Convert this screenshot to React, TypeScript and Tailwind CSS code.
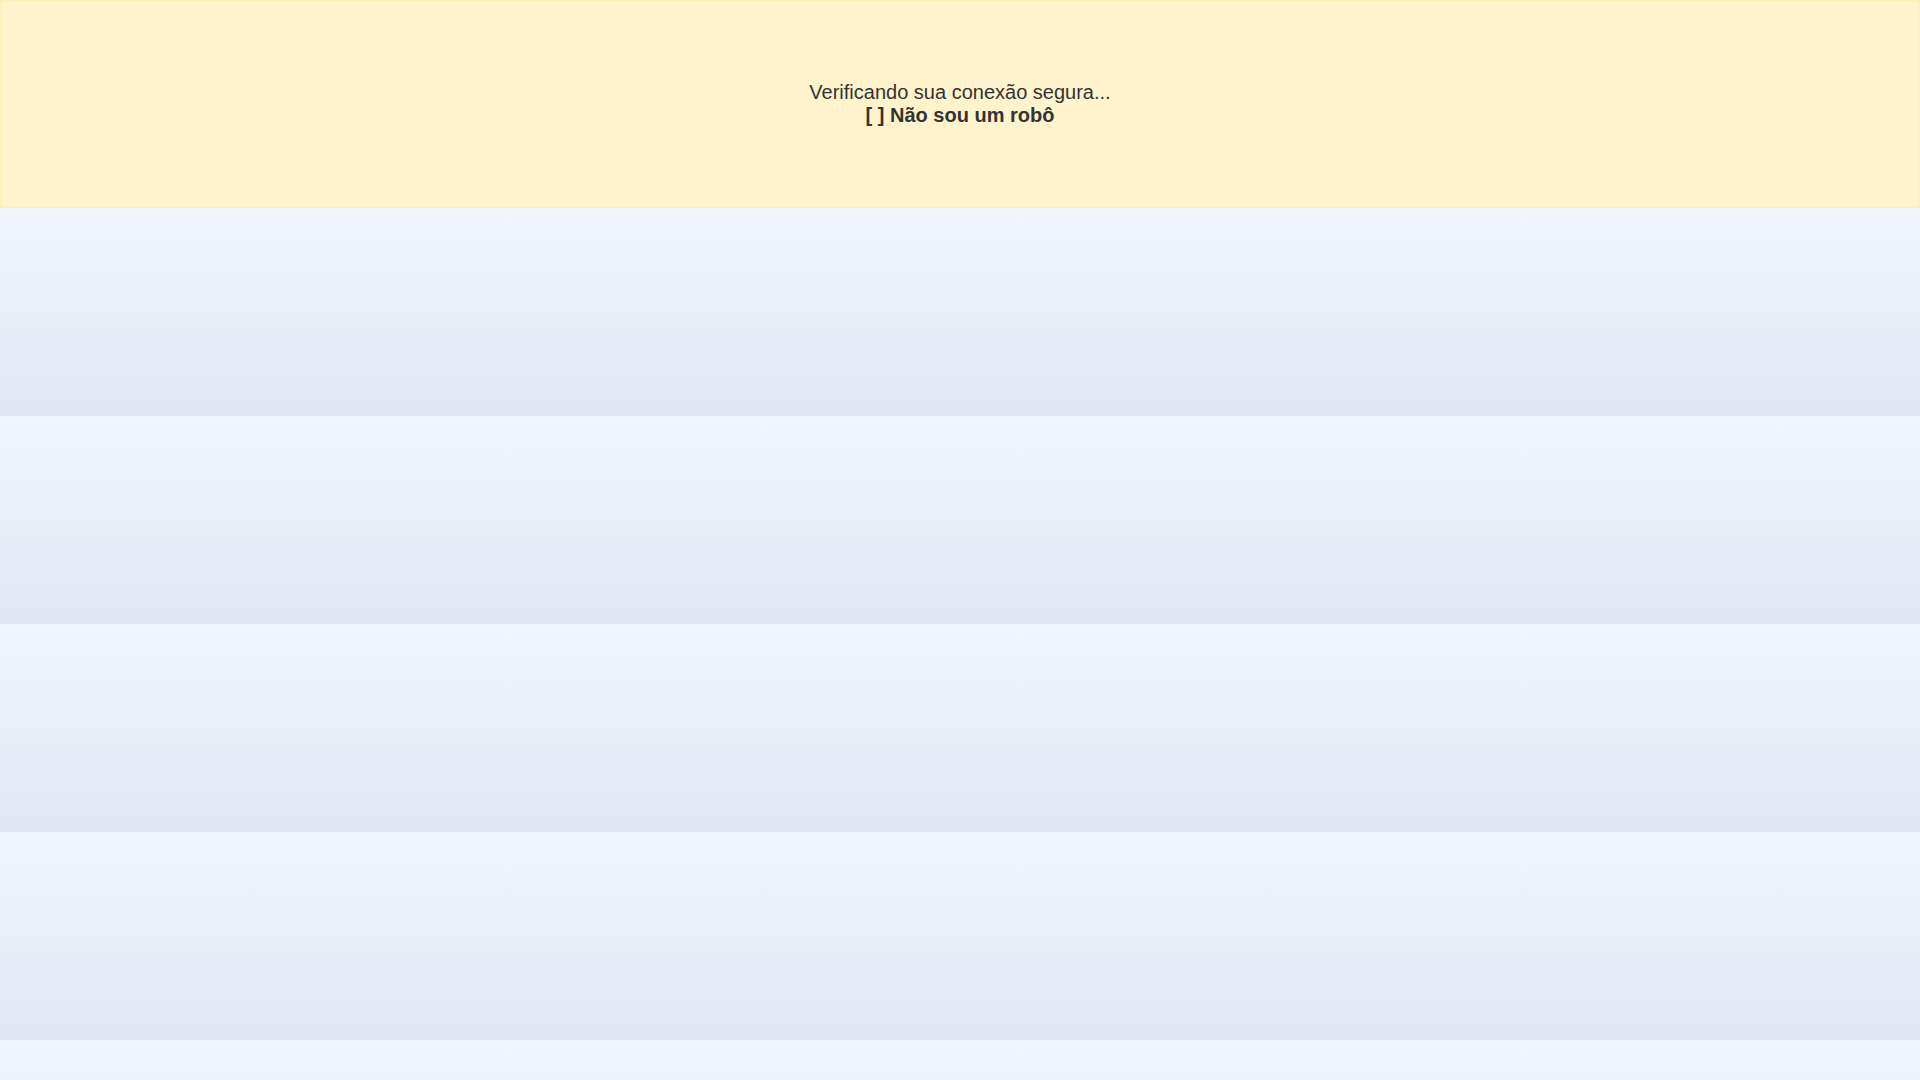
export default function App() {
  const bands = [0, 1, 2, 3, 4];

  return (
    <main className="min-h-screen w-full bg-[#f1f5fe] font-['Liberation_Sans',Arial,sans-serif]">
      {/* BANNER */}
      <div className="flex h-[208px] flex-col items-center justify-center border border-[#ffeeba] bg-[#fff3cd] text-center text-[20px] leading-[23px] text-[#333333]">
        <p>Verificando sua conexão segura...</p>
        <p className="font-bold">[ ] Não sou um robô</p>
      </div>

      {/* PLACEHOLDER BANDS */}
      <div className="flex flex-col">
        {bands.map((band) => (
          <div
            key={band}
            className="h-[208px] w-full bg-gradient-to-b from-[#f1f5fe] to-[#e0e7f2]"
          />
        ))}
      </div>
    </main>
  );
}
